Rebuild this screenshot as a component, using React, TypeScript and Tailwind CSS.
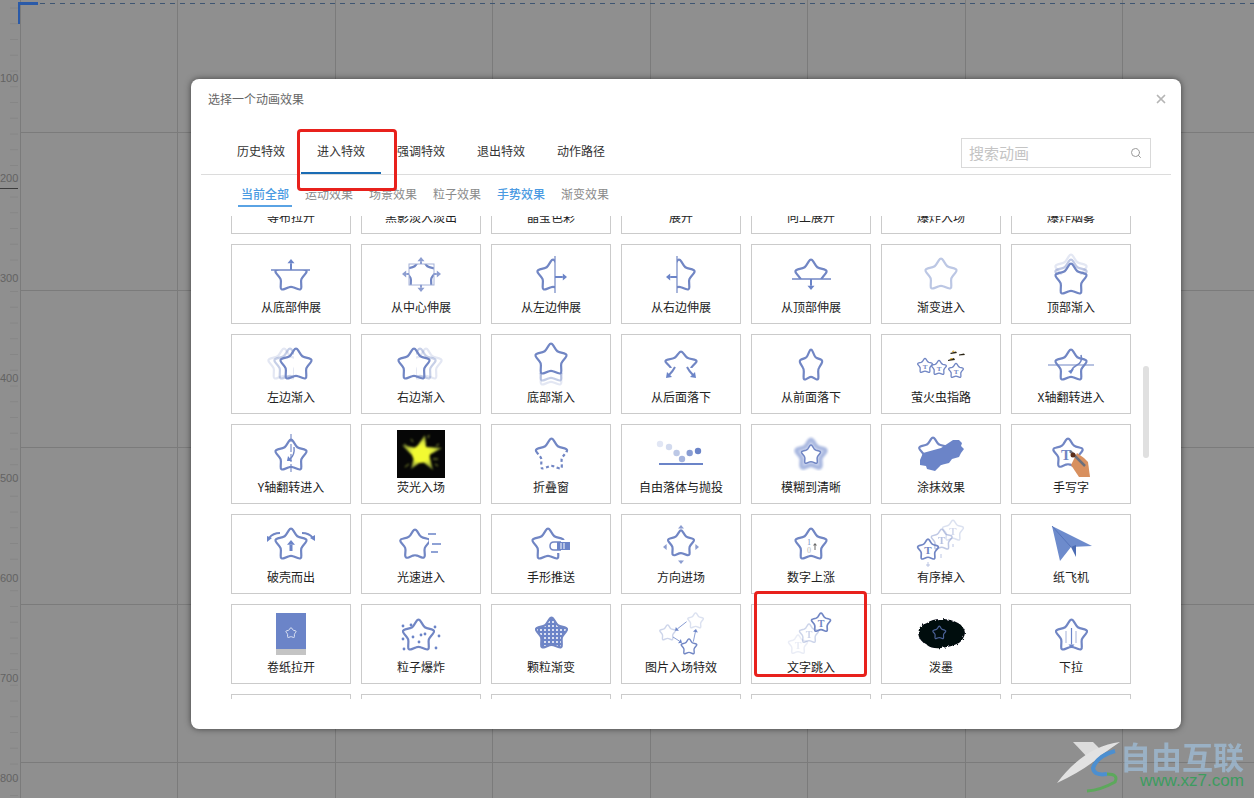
import { Search, X } from 'lucide-react';
import type { ReactNode } from 'react';

const BLUE = '#7186c4';
const SOLID = '#6b84c8';

function starPath(cx: number, cy: number, r: number, sx = 1, sy = 1) {
  const pts: [number, number][] = [];
  for (let i = 0; i < 10; i++) {
    const rad = i % 2 === 0 ? r : r * 0.58;
    const a = (Math.PI / 5) * i - Math.PI / 2;
    pts.push([cx + Math.cos(a) * rad * sx, cy + Math.sin(a) * rad * sy]);
  }
  let d = '';
  pts.forEach((p, i) => {
    const prev = pts[(i + 9) % 10];
    const next = pts[(i + 1) % 10];
    const k = i % 2 === 0 ? 0.36 : 0.2;
    const a = [p[0] + (prev[0] - p[0]) * k, p[1] + (prev[1] - p[1]) * k];
    const b = [p[0] + (next[0] - p[0]) * k, p[1] + (next[1] - p[1]) * k];
    d += `${i === 0 ? 'M' : 'L'}${a[0].toFixed(1)} ${a[1].toFixed(1)}Q${p[0].toFixed(1)} ${p[1].toFixed(1)} ${b[0].toFixed(1)} ${b[1].toFixed(1)}`;
  });
  return d + 'Z';
}

type StarProps = {
  x?: number;
  y?: number;
  r?: number;
  w?: number;
  o?: number;
  c?: string;
  sx?: number;
  sy?: number;
  clip?: string;
  fill?: string;
  dash?: string;
};

function Star({ x = 60, y = 31, r = 18, w = 2.2, o = 1, c = BLUE, sx = 1, sy = 1, clip, fill = 'none', dash }: StarProps) {
  return (
    <path
      d={starPath(x, y, r, sx, sy)}
      fill={fill}
      stroke={c}
      strokeWidth={w}
      opacity={o}
      strokeDasharray={dash}
      clipPath={clip ? `url(#${clip})` : undefined}
    />
  );
}

function Clip({ id, x, y, w, h }: { id: string; x: number; y: number; w: number; h: number }) {
  return (
    <clipPath id={id}>
      <rect x={x} y={y} width={w} height={h} />
    </clipPath>
  );
}

function Arrow({ x1, y1, x2, y2, w = 2, h = 3.5, c = SOLID, o = 1 }: { x1: number; y1: number; x2: number; y2: number; w?: number; h?: number; c?: string; o?: number }) {
  const a = Math.atan2(y2 - y1, x2 - x1);
  const bx = x2 - Math.cos(a) * h * 1.2;
  const by = y2 - Math.sin(a) * h * 1.2;
  const nx = -Math.sin(a) * h;
  const ny = Math.cos(a) * h;
  return (
    <g opacity={o}>
      <line x1={x1} y1={y1} x2={bx} y2={by} stroke={c} strokeWidth={w} />
      <polygon points={`${x2},${y2} ${bx + nx},${by + ny} ${bx - nx},${by - ny}`} fill={c} />
    </g>
  );
}

function T({ x, y, s = 10, c = BLUE, o = 1 }: { x: number; y: number; s?: number; c?: string; o?: number }) {
  return (
    <text x={x} y={y} fontSize={s} fontWeight={700} textAnchor="middle" fill={c} opacity={o} fontFamily="'Liberation Serif', serif">
      T
    </text>
  );
}

const icons: Record<string, ReactNode> = {
  从底部伸展: (
    <>
      <Clip id="c1" x={30} y={26} w={60} h={30} />
      <Star y={32} clip="c1" />
      <line x1={40} y1={26} x2={79} y2={26} stroke={BLUE} strokeWidth={1.3} />
      <Arrow x1={60} y1={26} x2={60} y2={15} />
    </>
  ),
  从中心伸展: (
    <>
      <Clip id="c2" x={48} y={20} w={25} h={21} />
      <Star y={31} clip="c2" />
      <rect x={48} y={20} width={25} height={21} fill="none" stroke="#a5b2d8" strokeWidth={1} />
      <Arrow x1={60} y1={20} x2={60} y2={13} c="#8c9dd0" />
      <Arrow x1={60} y1={41} x2={60} y2={48} c="#8c9dd0" />
      <Arrow x1={48} y1={30} x2={41} y2={30} c="#8c9dd0" />
      <Arrow x1={73} y1={30} x2={80} y2={30} c="#8c9dd0" />
    </>
  ),
  从左边伸展: (
    <>
      <Clip id="c3" x={30} y={5} w={34} h={50} />
      <Star x={62} y={32} clip="c3" />
      <line x1={64} y1={12} x2={64} y2={49} stroke={BLUE} strokeWidth={1.2} />
      <Arrow x1={64} y1={33} x2={76} y2={33} />
    </>
  ),
  从右边伸展: (
    <>
      <Clip id="c4" x={56} y={5} w={34} h={50} />
      <Star x={58} y={32} clip="c4" />
      <line x1={56} y1={12} x2={56} y2={49} stroke={BLUE} strokeWidth={1.2} />
      <Arrow x1={56} y1={33} x2={45} y2={33} />
    </>
  ),
  从顶部伸展: (
    <>
      <Clip id="c5" x={30} y={5} w={60} h={30} />
      <Star y={32} clip="c5" />
      <line x1={41} y1={35} x2={80} y2={35} stroke={BLUE} strokeWidth={1.3} />
      <Arrow x1={60} y1={35} x2={60} y2={46} />
    </>
  ),
  渐变进入: <Star c="#bcc7e4" />,
  顶部渐入: (
    <>
      <Clip id="c6" x={30} y={0} w={60} h={31} />
      <Star y={27} o={0.2} clip="c6" />
      <Star y={32} o={0.45} clip="c6" />
      <Star y={36} />
    </>
  ),
  左边渐入: (
    <>
      <Clip id="c7" x={25} y={5} w={38} h={50} />
      <Star x={53} o={0.2} clip="c7" />
      <Star x={59} o={0.4} clip="c7" />
      <Star x={65} />
    </>
  ),
  右边渐入: (
    <>
      <Clip id="c8" x={55} y={5} w={38} h={50} />
      <Star x={65} o={0.2} clip="c8" />
      <Star x={59} o={0.4} clip="c8" />
      <Star x={53} />
    </>
  ),
  底部渐入: (
    <>
      <Clip id="c9" x={30} y={39} w={60} h={20} />
      <Star y={33} o={0.4} clip="c9" />
      <Star y={37} o={0.2} clip="c9" />
      <Star y={26} />
    </>
  ),
  从后面落下: (
    <>
      <Clip id="c10" x={30} y={5} w={60} h={29} />
      <Star y={31} sy={0.82} clip="c10" />
      <path d="M54 33Q52 37 48 41M66 33Q68 37 72 41" fill="none" stroke={BLUE} strokeWidth={2} />
      <polygon points="45,44 51,43 46,38" fill={SOLID} />
      <polygon points="75,44 69,43 74,38" fill={SOLID} />
    </>
  ),
  从前面落下: <Star y={32} sx={0.72} />,
  萤火虫指路: (
    <>
      <Star x={44} y={32} r={8.500} w={1.300} />
      <Star x={58} y={34} r={8.500} w={1.300} />
      <Star x={75} y={37} r={8.500} w={1.300} />
      <T x={44} y={35} s={7} />
      <T x={58} y={37} s={7} />
      <T x={75} y={40} s={7} />
      <path d="M69 19l6-1.500 1 1.500-6 1zM78 20.500l5-1 1 1.500-6 .5zM67 26l6-2 1 2-7 1z" fill="#2a2414" />
      <path d="M71 17l2-.5.5 1-2 .5zM69 24.500l2-.5.5 1-2 .5z" fill="#d9a520" />
    </>
  ),
  X轴翻转进入: (
    <>
      <Star y={32} />
      <line x1={37} y1={31} x2={83} y2={31} stroke={BLUE} strokeWidth={1.2} />
      <path d="M70 21Q72 28 66 31Q62 33 60 37" fill="none" stroke={BLUE} strokeWidth={1.6} />
      <polygon points="57,37 63,35 60,40" fill={SOLID} />
    </>
  ),
  Y轴翻转进入: (
    <>
      <Star y={32} />
      <line x1={60} y1={10} x2={60} y2={50} stroke={BLUE} strokeWidth={1.1} strokeDasharray="8 2" />
      <path d="M63 23Q64 31 59 35" fill="none" stroke={BLUE} strokeWidth={1.4} />
      <polygon points="56,37 61,37 57,32" fill={SOLID} />
    </>
  ),
  荧光入场: (
    <>
      <defs>
        <radialGradient id="glow">
          <stop offset="0%" stopColor="#f4fb3c" />
          <stop offset="55%" stopColor="#e0ec3c" />
          <stop offset="100%" stopColor="#7c8a30" />
        </radialGradient>
        <filter id="burst">
          <feGaussianBlur stdDeviation="0.800" />
        </filter>
      </defs>
      <rect x={36} y={6} width={48} height={48} fill="#060606" />
      <g filter="url(#burst)">
        <polygon
          points="64,11 65,23 81,24 68,31 72,46 61,37 50,45 53,33 41,21 55,24"
          fill="url(#glow)"
        />
        <circle cx={60} cy={30} r={9} fill="#f2fa32" />
        <path d="M46 22l-3-2M74 40l3 2M67 14l1-3M48 40l-4 3M75 22l3-2M52 18l-2-3M72 35l5 0" stroke="#9aa838" strokeWidth={1} />
      </g>
    </>
  ),
  折叠窗: (
    <>
      <Clip id="c11" x={30} y={5} w={60} h={23} />
      <Clip id="c12" x={30} y={28} w={60} h={28} />
      <Star x={60.5} clip="c11" />
      <Star x={60.5} clip="c12" dash="3 2.500" />
    </>
  ),
  自由落体与抛投: (
    <>
      {[
        [39, 20, 0.2],
        [48, 23, 0.3],
        [55.6, 29, 0.45],
        [61, 35, 0.6],
        [68.7, 29, 0.8],
        [77, 27, 1],
      ].map(([x, y, o]) => (
        <circle key={x} cx={x} cy={y} r={3.2} fill={SOLID} opacity={o} />
      ))}
      <rect x={38} y={39} width={44} height={2} fill={SOLID} />
    </>
  ),
  模糊到清晰: (
    <>
      <defs>
        <filter id="blur1">
          <feGaussianBlur stdDeviation="1.300" />
        </filter>
      </defs>
      <g filter="url(#blur1)">
        <path d={starPath(60, 31, 17)} fill="#d2daf0" stroke="#a9b8e0" strokeWidth={4} />
      </g>
      <path d={starPath(60, 31, 11)} fill="#fff" stroke={BLUE} strokeWidth={1.500} />
    </>
  ),
  涂抹效果: (
    <>
      <Star x={52} y={28} r={16} />
      <polygon points="39,36 42,29 60,24 72,16 78,16 81,19 80,22 83,25 80,29 78,33 71,35 68,39 60,41 54,47 46,45 45,42 39,41" fill={SOLID} />
    </>
  ),
  手写字: (
    <>
      <Star x={57} y={30} r={17} />
      <T x={55} y={36} s={15} />
      <polygon points="60,41 66,29 73,34 77,38 79,53 68,53 64,47" fill="#d8905f" />
      <line x1={59} y1={27} x2={74} y2={42} stroke="#6b6f7c" strokeWidth={2.500} />
      <circle cx={62} cy={31} r={2.500} fill="#5a2f1c" />
    </>
  ),
  破壳而出: (
    <>
      <Star />
      <Arrow x1={60} y1={37} x2={60} y2={26} w={3} h={4} />
      <path d="M49 19Q42 19 38 24M71 19Q78 19 82 24" fill="none" stroke={BLUE} strokeWidth={2} />
      <polygon points="36,28 41,24 36,22" fill={SOLID} />
      <polygon points="84,27 79,24 84,21" fill={SOLID} />
    </>
  ),
  光速进入: (
    <>
      <Clip id="c13" x={30} y={5} w={38} h={50} />
      <Star x={54} y={31} r={17} clip="c13" />
      <path d="M67 20h8M71 30h9M70 38h7" stroke={SOLID} strokeWidth={1.6} />
    </>
  ),
  手形推送: (
    <>
      <Star x={57} y={31} />
      <rect x={58} y={26} width={22} height={13} fill="#fff" />
      <path d="M70 28H63Q59 28 59 32Q59 36 63 36H70" fill="#fff" stroke={BLUE} strokeWidth={1.5} />
      <rect x={66} y={28} width={13} height={8} fill={SOLID} />
      <path d="M70 29v6M73 29v6" stroke="#fff" strokeWidth={1} />
    </>
  ),
  方向进场: (
    <>
      <Star y={30} r={15} />
      <Arrow x1={60} y1={15} x2={60} y2={11} w={1} h={3} c="#8c9dd0" />
      <Arrow x1={60} y1={46} x2={60} y2={50} w={1} h={3} c="#8c9dd0" />
      <Arrow x1={46} y1={33} x2={42} y2={33} w={1} h={3} c="#8c9dd0" />
      <Arrow x1={74} y1={33} x2={78} y2={33} w={1} h={3} c="#8c9dd0" />
    </>
  ),
  数字上涨: (
    <>
      <Star />
      <text x={58} y={31} fontSize={8} textAnchor="middle" fill={BLUE} fontFamily="'Liberation Serif', serif">1</text>
      <text x={58} y={39} fontSize={8} textAnchor="middle" fill="#b8b8b8" fontFamily="'Liberation Serif', serif">0</text>
      <Arrow x1={64} y1={36} x2={64} y2={29} w={1} h={2} c="#666" />
    </>
  ),
  有序掉入: (
    <>
      <Star x={72} y={17} r={12} w={1.500} o={0.25} />
      <T x={72} y={21} s={11} o={0.3} />
      <Star x={60.7} y={26} r={12} w={1.500} o={0.45} />
      <T x={60.7} y={30} s={11} o={0.5} />
      <Star x={47} y={36} r={12} w={1.700} />
      <T x={47} y={40} s={11} />
      <path d="M47 48v5M45 51h4M60 40v4M72 30v3" stroke={BLUE} strokeWidth={0.8} opacity={0.6} />
    </>
  ),
  纸飞机: (
    <>
      <polygon points="41,12 81,32 60,33 49,47" fill="#6d8bcc" />
      <polygon points="60,33 65,31 65,43" fill="#4c6cb3" />
      <polyline points="41,12 60,33" fill="none" stroke="#4f6fb6" strokeWidth={0.8} />
    </>
  ),
  卷纸拉开: (
    <>
      <rect x={45} y={9} width={30} height={36} fill={SOLID} />
      <rect x={45} y={45} width={30} height={6} fill="#c4c4c4" />
      <Star y={29} r={6} w={1} c="#dfe5f5" />
    </>
  ),
  粒子爆炸: (
    <>
      <Star x={57.5} y={32} />
      {[
        [42, 22], [50, 21], [74, 23], [78, 32], [42, 35], [43, 45], [75, 44], [52, 33], [60, 31], [64, 30], [58, 38],
      ].map(([x, y]) => (
        <circle key={`${x}-${y}`} cx={x} cy={y} r={1.4} fill={SOLID} />
      ))}
    </>
  ),
  颗粒渐变: (
    <>
      <defs>
        <pattern id="dots" width="4" height="4" patternUnits="userSpaceOnUse">
          <rect width="4" height="4" fill={SOLID} />
          <circle cx="2" cy="2" r="1" fill="#fff" />
        </pattern>
      </defs>
      <Star x={60.5} y={30} fill="url(#dots)" />
      <path d={starPath(60.5, 30, 16)} fill="url(#dots)" stroke="none" />
    </>
  ),
  图片入场特效: (
    <>
      <Star x={46.6} y={29} r={9} w={1.400} o={0.35} />
      <Star x={74.6} y={17} r={9} w={1.400} o={0.25} />
      <Star x={68} y={43} r={9} w={1.400} />
      <Arrow x1={65.6} y1={17.7} x2={54} y2={26.7} w={0.8} h={2.500} />
      <Arrow x1={52} y1={33} x2={61} y2={38.7} w={0.8} h={2.500} />
      <Arrow x1={72.3} y1={37.7} x2={75} y2={25} w={0.8} h={2.500} />
    </>
  ),
  文字跳入: (
    <>
      <Star x={47} y={41} r={11} w={1.500} o={0.15} />
      <T x={47} y={45} s={10} o={0.15} />
      <Star x={58} y={30} r={11} w={1.500} o={0.35} />
      <T x={58} y={34} s={10} o={0.35} />
      <Star x={70} y={19} r={11} w={1.700} />
      <T x={70} y={23} s={10} />
    </>
  ),
  泼墨: (
    <>
      <defs>
        <filter id="ink">
          <feTurbulence type="fractalNoise" baseFrequency="0.35" numOctaves="2" seed="4" />
          <feDisplacementMap in="SourceGraphic" scale="4" />
        </filter>
      </defs>
      <path
        filter="url(#ink)"
        d="M37 29Q38 21 46 19Q51 15 60 15Q70 15 77 19Q83 22 84 29Q83 35 78 39Q70 43 60 44Q51 45 46 41Q38 37 37 29Z"
        fill="#05080f"
      />
      <Star x={58.3} y={29} r={7.500} w={1.200} c="#4a6196" />
    </>
  ),
  下拉: (
    <>
      <Star x={60.5} y={32} />
      <path d="M55 27v12M65 27v12" stroke="#a5b2d8" strokeWidth={1} />
      <Arrow x1={60.5} y1={24} x2={60.5} y2={44} w={1.200} h={3} />
    </>
  ),
};

const rows = [
  ['等布拉开', '黑影淡入淡出', '晶莹色彩', '展开', '向上展开', '爆炸入场', '爆炸烟雾'],
  ['从底部伸展', '从中心伸展', '从左边伸展', '从右边伸展', '从顶部伸展', '渐变进入', '顶部渐入'],
  ['左边渐入', '右边渐入', '底部渐入', '从后面落下', '从前面落下', '萤火虫指路', 'X轴翻转进入'],
  ['Y轴翻转进入', '荧光入场', '折叠窗', '自由落体与抛投', '模糊到清晰', '涂抹效果', '手写字'],
  ['破壳而出', '光速进入', '手形推送', '方向进场', '数字上涨', '有序掉入', '纸飞机'],
  ['卷纸拉开', '粒子爆炸', '颗粒渐变', '图片入场特效', '文字跳入', '泼墨', '下拉'],
  ['', '', '', '', '', '', ''],
];

const tabs = ['历史特效', '进入特效', '强调特效', '退出特效', '动作路径'];
const subTabs = ['当前全部', '运动效果', '场景效果', '粒子效果', '手势效果', '渐变效果'];

function Cell({ name }: { name: string }) {
  return (
    <div className="h-[80px] border border-[#cbcbcb] bg-white flex flex-col items-center">
      <svg width={118} height={56} viewBox="1 1 118 56" className="shrink-0">
        {icons[name]}
      </svg>
      <span className="text-[12px] leading-[12px] text-[#222] whitespace-nowrap">{name}</span>
    </div>
  );
}

function Backdrop() {
  const vx = [20, 177, 335, 492, 650, 807, 965, 1122];
  const hy = [132, 290, 447, 604, 762];
  const ticks = Array.from({ length: 80 }, (_, i) => i * 15.75 + 8);
  return (
    <svg width={1254} height={798} className="absolute inset-0">
      {vx.map((x) => (
        <line key={x} x1={x + 0.5} y1={0} x2={x + 0.5} y2={798} stroke="#7b7b7b" />
      ))}
      {hy.map((y) => (
        <line key={y} x1={20} y1={y + 0.5} x2={1254} y2={y + 0.5} stroke="#7b7b7b" />
      ))}
      {ticks.map((y) => (
        <line key={y} x1={10} y1={y} x2={18} y2={y} stroke="#868686" />
      ))}
      {[100, 200, 300, 400, 500, 600, 700, 800].map((n, i) => (
        <text key={n} x={0} y={82 + i * 100} fontSize={11} fill="#636363" fontFamily="'Liberation Sans', sans-serif">
          {n}
        </text>
      ))}
      <line x1={0} y1={188.5} x2={18} y2={188.5} stroke="#3c3c3c" />
      <line x1={20} y1={3.5} x2={1254} y2={3.5} stroke="#3f5672" strokeDasharray="5 5" />
      <rect x={18} y={2} width={20} height={3} fill="#2a5aa8" />
      <rect x={18} y={2} width={2} height={22} fill="#2a5aa8" />
    </svg>
  );
}

export default function App() {
  return (
    <div className="relative w-[1254px] h-[798px] overflow-hidden bg-[#8f8f8f] font-['Noto_Sans_CJK_SC','Liberation_Sans',sans-serif]">
      <Backdrop />

      {/* Dialog */}
      <div className="absolute left-[191px] top-[79px] w-[990px] h-[650px] bg-white rounded-lg shadow-[0_0_6px_rgba(0,0,0,0.55)] flex flex-col">
        <div className="flex items-center justify-between h-[40px] pl-[17px] pr-[13px] shrink-0">
          <span className="text-[12px] text-[#666]">选择一个动画效果</span>
          <X size={14} strokeWidth={3} className="text-[#b5b5b5]" />
        </div>

        <div className="flex items-end justify-between h-[56px] mx-[10px] pr-[20px] border-b border-[#dcdcdc] shrink-0">
          <div className="flex pl-[20px] h-[45px]">
            {tabs.map((tab, i) => (
              <div
                key={tab}
                className={`w-[80px] h-full flex items-center justify-center text-[12px] text-[#333] border-b-2 ${i === 1 ? 'border-[#1a6cb4]' : 'border-transparent'}`}
              >
                {tab}
              </div>
            ))}
          </div>
          <div className="w-[190px] h-[30px] mb-[6px] border border-[#d9d9d9] flex items-center justify-between pl-[7px] pr-[8px]">
            <span className="text-[15px] text-[#c4c4c4]">搜索动画</span>
            <Search size={12} className="text-[#9a9a9a]" />
          </div>
        </div>

        <div className="flex gap-[10px] pl-[47px] pt-[8px] h-[32px] shrink-0">
          {subTabs.map((tab, i) => (
            <div
              key={tab}
              className={`w-[54px] h-full flex items-center justify-center text-[12px] border-b-2 ${i === 0 ? 'border-[#5aa3e4] text-[#4a9ae2] font-medium' : 'border-transparent'} ${i === 4 ? 'text-[#4a9ae2] font-medium' : ''} ${i !== 0 && i !== 4 ? 'text-[#8a8a8a]' : ''}`}
            >
              {tab}
            </div>
          ))}
        </div>

        <div className="h-[483px] mt-[9px] overflow-hidden shrink-0">
          <div className="grid grid-cols-[repeat(7,120px)] gap-[10px] ml-[40px] -mt-[62px]">
            {rows.flat().map((name, i) => (
              <Cell key={i} name={name} />
            ))}
          </div>
        </div>

        {/* Scrollbar */}
        <div className="absolute left-[952px] top-[287px] w-[6px] h-[92px] rounded-[3px] bg-[#e0e0e0]" />
      </div>

      {/* Red callouts */}
      <div className="absolute left-[297px] top-[129px] w-[100px] h-[62px] border-[3px] border-[#e8211c] rounded-[4px]" />
      <div className="absolute left-[754px] top-[591px] w-[113px] h-[86px] border-[3px] border-[#e8211c] rounded-[4px]" />

      {/* Watermark */}
      <div className="absolute left-[1057px] top-[738px] w-[197px] h-[60px]">
        <svg width={197} height={60} className="absolute inset-0">
          <path d="M16 4H36L44 12L33 22Z" fill="#dcdcdc" />
          <path d="M63 4Q28 8 0 45Q28 32 46 16Q54 10 63 4Z" fill="#e2e2e2" />
          <path d="M58 13Q40 18 36 30Q37 38 50 36" fill="none" stroke="#4c8fd0" strokeWidth={4} />
          <path d="M50 36Q62 36 58 44Q44 52 30 53" fill="none" stroke="#5da85c" strokeWidth={3} />
        </svg>
        <span className="absolute left-[63px] top-[2px] text-[31px] leading-[32px] font-bold text-[#9fc0dc] opacity-70 whitespace-nowrap">
          自由互联
        </span>
        <span className="absolute left-[83px] top-[35px] text-[17px] leading-[16px] text-[#3d9c5f] font-['Liberation_Sans',sans-serif] whitespace-nowrap">
          www.xz7.com
        </span>
      </div>
    </div>
  );
}
